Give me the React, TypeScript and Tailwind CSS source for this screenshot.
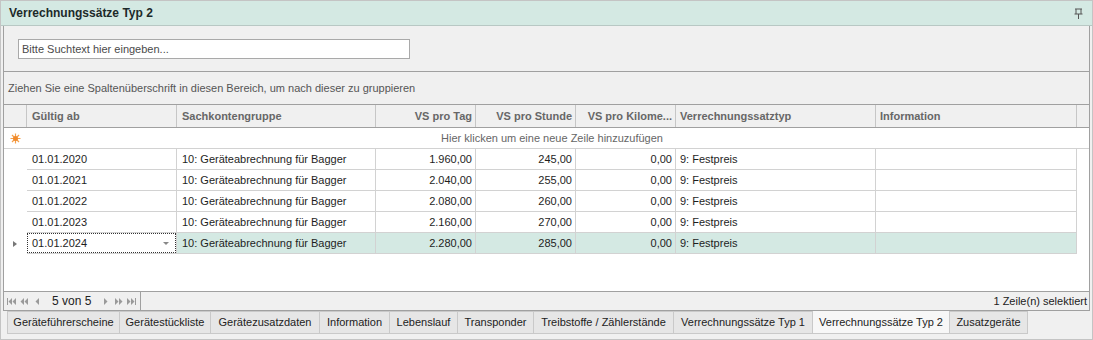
const rows = [
  { date: '01.01.2020', tag: '1.960,00', std: '245,00' },
  { date: '01.01.2021', tag: '2.040,00', std: '255,00' },
  { date: '01.01.2022', tag: '2.080,00', std: '260,00' },
  { date: '01.01.2023', tag: '2.160,00', std: '270,00' },
  { date: '01.01.2024', tag: '2.280,00', std: '285,00' },
];

const tabs = [
  { t: 'Geräteführerscheine', w: 'w-[113px]' },
  { t: 'Gerätestückliste', w: 'w-[91px]' },
  { t: 'Gerätezusatzdaten', w: 'w-[109px]' },
  { t: 'Information', w: 'w-[70px]' },
  { t: 'Lebenslauf', w: 'w-[68px]' },
  { t: 'Transponder', w: 'w-[76px]' },
  { t: 'Treibstoffe / Zählerstände', w: 'w-[140px]' },
  { t: 'Verrechnungssätze Typ 1', w: 'w-[139px]' },
  { t: 'Verrechnungssätze Typ 2', w: 'w-[137px]' },
  { t: 'Zusatzgeräte', w: 'w-[78px]' },
];

const cols = 'grid grid-cols-[23px_150px_199px_100px_100px_100px_200px_201px_1fr]';

const Pin = () => (
  <svg width="9" height="11" viewBox="0 0 9 11" className="text-[#555]">
    <path d="M1 1h7M2 1v5M7 1v5M0.5 6h8M4.5 6v5" stroke="currentColor" strokeWidth="1" fill="none" />
  </svg>
);

const Star = () => (
  <svg width="11" height="11" viewBox="0 0 11 11">
    <g stroke="#f5a04a" strokeWidth="1.2">
      <path d="M5.5 0.5v10M0.5 5.5h10M2 2l7 7M9 2l-7 7" />
    </g>
    <circle cx="5.5" cy="5.5" r="2.5" fill="#f08a2c" />
  </svg>
);

const PagerIcon = ({ d }: { d: string }) => (
  <svg width="9" height="7" viewBox="0 0 9 7" className="text-[#9a9a9a]">
    <path d={d} fill="currentColor" />
  </svg>
);

export default function App() {
  return (
    <div className="w-[1093px] h-[340px] bg-[#f0f0f0] border border-[#c4c4c4] flex flex-col text-[11px] text-[#1e1e1e] font-['Liberation_Sans',Arial,sans-serif] overflow-hidden">
      {/* Title */}
      <div className="h-[25px] shrink-0 bg-[#d4e9e3] border-b border-[#b8c8c4] flex items-center justify-between pl-[8px] pr-[9px]">
        <span className="font-bold text-[12px] text-[#1c2a2a]">Verrechnungssätze Typ 2</span>
        <Pin />
      </div>

      <div className="flex-1 flex flex-col px-[2px]">
        {/* Grid panel */}
        <div className="h-[285px] border border-[#a0a0a0] border-t-0 flex flex-col bg-[#f0f0f0]">
          {/* Search */}
          <div className="h-[46px] shrink-0 flex items-center pl-[14px] pt-[1px] border-b border-[#a0a0a0]">
            <div className="w-[392px] h-[20px] bg-white border border-[#a9a9a9] flex items-center px-[3px] text-[#4a4a4a]">
              Bitte Suchtext hier eingeben...
            </div>
          </div>
          {/* Group panel */}
          <div className="h-[33px] shrink-0 flex items-center pl-[4px] text-[#555] border-b border-[#a0a0a0]">
            Ziehen Sie eine Spaltenüberschrift in diesen Bereich, um nach dieser zu gruppieren
          </div>
          {/* Header */}
          <div className={`${cols} h-[23px] shrink-0 bg-[#f0f0f0] border-b border-[#a0a0a0] font-bold text-[#676767]`}>
            <div className="border-r border-[#c6c6c6]" />
            <div className="border-r border-[#c6c6c6] flex items-center pl-[5px]">Gültig ab</div>
            <div className="border-r border-[#c6c6c6] flex items-center pl-[5px]">Sachkontengruppe</div>
            <div className="border-r border-[#c6c6c6] flex items-center justify-end pr-[3px]">VS pro Tag</div>
            <div className="border-r border-[#c6c6c6] flex items-center justify-end pr-[3px]">VS pro Stunde</div>
            <div className="border-r border-[#c6c6c6] flex items-center justify-end pr-[3px]">VS pro Kilome...</div>
            <div className="border-r border-[#c6c6c6] flex items-center pl-[4px]">Verrechnungssatztyp</div>
            <div className="border-r border-[#c6c6c6] flex items-center pl-[4px]">Information</div>
            <div />
          </div>
          {/* Body */}
          <div className="flex-1 bg-white flex flex-col">
            <div className="h-[21px] flex border-b border-[#d2d2d2]">
              <div className="w-[23px] flex items-center justify-center">
                <Star />
              </div>
              <div className="w-[1050px] flex items-center justify-center text-[#666]">
                Hier klicken um eine neue Zeile hinzuzufügen
              </div>
            </div>
            {rows.map((r, i) => {
              const sel = i === rows.length - 1;
              const cell = `border-r border-b border-[#d2d2d2] flex items-center ${sel ? 'bg-[#d4e9e3]' : ''}`;
              return (
                <div key={r.date} className={`${cols} h-[21px]`}>
                  <div className="flex items-center justify-center">
                    {sel && <span className="w-0 h-0 border-y-[3px] border-y-transparent border-l-[4px] border-l-[#777] ml-[-1px]" />}
                  </div>
                  {sel ? (
                    <div className="border-b border-r border-[#d2d2d2] flex items-stretch bg-white">
                      <div className="flex-1 border border-dotted border-[#333] flex items-center justify-between pl-[4px] pr-[6px]">
                        <span>{r.date}</span>
                        <span className="w-0 h-0 border-x-[3px] border-x-transparent border-t-[3px] border-t-[#888]" />
                      </div>
                    </div>
                  ) : (
                    <div className={`${cell} pl-[5px]`}>{r.date}</div>
                  )}
                  <div className={`${cell} pl-[5px]`}>10: Geräteabrechnung für Bagger</div>
                  <div className={`${cell} justify-end pr-[3px]`}>{r.tag}</div>
                  <div className={`${cell} justify-end pr-[3px]`}>{r.std}</div>
                  <div className={`${cell} justify-end pr-[3px]`}>0,00</div>
                  <div className={`${cell} pl-[4px]`}>9: Festpreis</div>
                  <div className={cell} />
                  <div />
                </div>
              );
            })}
          </div>
          {/* Pager */}
          <div className="h-[19px] shrink-0 border-t border-[#a0a0a0] flex items-center justify-between bg-[#f0f0f0]">
            <div className="h-full w-[137px] border-r border-[#a0a0a0] flex items-center pl-[3px] gap-[4px]">
              <PagerIcon d="M0 0h1v7H0zM5 0v7L1.5 3.5zM9 0v7L5.5 3.5z" />
              <PagerIcon d="M4 0v7L0.5 3.5zM8 0v7L4.5 3.5z" />
              <PagerIcon d="M6 0v7L2.5 3.5z" />
              <span className="text-[12px] text-[#222] px-[6px]">5 von 5</span>
              <PagerIcon d="M3 0v7l3.5-3.5z" />
              <PagerIcon d="M1 0v7l3.5-3.5zM5 0v7l3.5-3.5z" />
              <PagerIcon d="M0 0v7l3.5-3.5zM4 0v7l3.5-3.5zM8 0h1v7H8z" />
            </div>
            <span className="pr-[2px] text-[#222]">1 Zeile(n) selektiert</span>
          </div>
        </div>

        {/* Tabs */}
        <div className="flex pl-[4px]">
          {tabs.map(({ t, w }) => {
            const active = t === 'Verrechnungssätze Typ 2';
            return (
              <div
                key={t}
                className={`${w} h-[23px] whitespace-nowrap flex items-center justify-center border border-l-0 first:border-l border-[#c9c9c9] text-[#222] ${
                  active ? 'bg-[#f7f7f7] border-t-0' : 'bg-[#e6e6e6]'
                }`}
              >
                {t}
              </div>
            );
          })}
        </div>
      </div>
    </div>
  );
}
